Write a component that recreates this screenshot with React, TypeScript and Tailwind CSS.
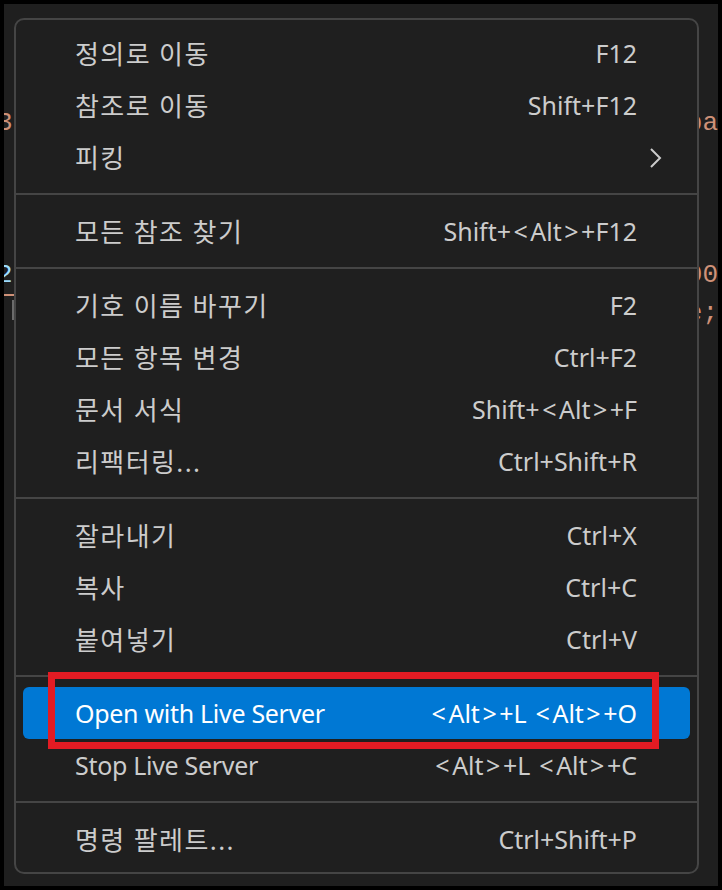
import React from 'react'

type Item = {
  label: string
  shortcut?: string
  submenu?: boolean
  active?: boolean
}

// groups of menu entries, separators go between them
const groups: Item[][] = [
  [
    { label: '정의로 이동', shortcut: 'F12' },
    { label: '참조로 이동', shortcut: 'Shift+F12' },
    { label: '피킹', submenu: true },
  ],
  [{ label: '모든 참조 찾기', shortcut: 'Shift+<Alt>+F12' }],
  [
    { label: '기호 이름 바꾸기', shortcut: 'F2' },
    { label: '모든 항목 변경', shortcut: 'Ctrl+F2' },
    { label: '문서 서식', shortcut: 'Shift+<Alt>+F' },
    { label: '리팩터링...', shortcut: 'Ctrl+Shift+R' },
  ],
  [
    { label: '잘라내기', shortcut: 'Ctrl+X' },
    { label: '복사', shortcut: 'Ctrl+C' },
    { label: '붙여넣기', shortcut: 'Ctrl+V' },
  ],
  [
    { label: 'Open with Live Server', shortcut: '<Alt>+L <Alt>+O', active: true },
    { label: 'Stop Live Server', shortcut: '<Alt>+L <Alt>+C' },
  ],
  [{ label: '명령 팔레트...', shortcut: 'Ctrl+Shift+P' }],
]

// angle brackets are much wider in the original UI font
function Shortcut({ text }: { text: string }) {
  return (
    <span className="whitespace-nowrap">
      {text.split(/([<>])/).map((part, i) =>
        part === '<' || part === '>' ? (
          <span key={i} className="px-[2.5px]">
            {part}
          </span>
        ) : (
          part
        )
      )}
    </span>
  )
}

function MenuRow({ item }: { item: Item }) {
  const korean = /[가-힣]/.test(item.label)
  return (
    <div
      className={
        'mx-[7px] flex h-[52px] items-center justify-between rounded-[6px] pl-[52px] pr-[53px] pt-[2px] ' +
        (item.active ? 'bg-[#0078d4] text-white' : 'text-[#cccccc]')
      }
    >
      <span
        className={
          'whitespace-nowrap ' + (korean ? 'text-[26px] tracking-[1.4px]' : 'tracking-[-0.3px]')
        }
      >
        {item.label}
      </span>
      {item.shortcut && <Shortcut text={item.shortcut} />}
      {item.submenu && (
        <svg className="mr-[-26px]" width="14" height="20" viewBox="0 0 14 20" fill="none">
          <polyline points="2,1 11,10 2,19" stroke="#cccccc" strokeWidth="2" />
        </svg>
      )}
    </div>
  )
}

function CodeLine({ left, right }: { left?: React.ReactNode; right?: React.ReactNode }) {
  return (
    <div className="flex h-[38px] items-start justify-between">
      <div className="ml-[-7px]">{left}</div>
      <div>{right}</div>
    </div>
  )
}

export default function App() {
  return (
    <div className="h-[890px] w-[722px] bg-black p-[4px]">
      <div className="relative h-[882px] w-full overflow-hidden bg-[#1f1f1f] font-['Liberation_Mono',monospace] text-[26px] leading-[26px]">
        {/* editor text peeking out around the menu */}
        <div className="flex flex-col pt-[106px]">
          <CodeLine
            left={
              <span className="text-[#ce9178]">
                3<span className="text-[#cccccc]">,</span>
              </span>
            }
            right={<span className="text-[#ce9178]">pa</span>}
          />
          <CodeLine />
          <CodeLine />
          <CodeLine />
          <CodeLine
            left={
              <span className="border-b-2 border-[#ce9178] pb-[4px] text-[#9cdcfe]">
                2<span className="text-[#ce9178]">,</span>
              </span>
            }
            right={<span className="text-[#ce9178]">00</span>}
          />
          <CodeLine
            left={<div className="ml-[15px] h-[20px] w-[2px] bg-[#6b6b6b]" />}
            right={<span className="text-[#ce9178]">e;</span>}
          />
        </div>

        {/* context menu */}
        <div className="absolute left-[10px] top-[14px] w-[685px] rounded-[10px] border-2 border-[#454545] bg-[#1f1f1f] py-[7px] font-['Noto_Sans','Noto_Sans_CJK_KR',sans-serif] text-[25px] leading-normal">
          {groups.map((group, gi) => (
            <div key={gi}>
              {gi > 0 && (
                <div className="flex h-[22px] items-center">
                  <div className="h-[2px] w-full bg-[#454545]" />
                </div>
              )}
              {group.map((item) => (
                <MenuRow key={item.label} item={item} />
              ))}
            </div>
          ))}
        </div>

        {/* red annotation box */}
        <div className="absolute left-[44px] top-[668px] h-[77px] w-[611px] border-[7px] border-[#e31b23]" />
      </div>
    </div>
  )
}
